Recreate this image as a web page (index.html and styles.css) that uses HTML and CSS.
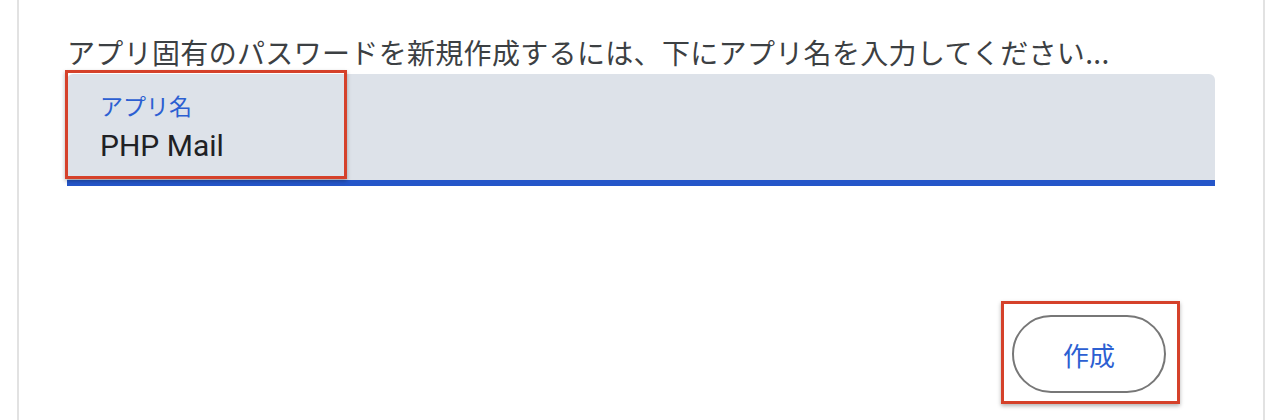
FILE: index.html
```html
<!DOCTYPE html>
<html lang="ja">
<head>
<meta charset="utf-8">
<link rel="stylesheet" href="styles.css">
</head>
<body>
<div class="card">
  <p class="intro">アプリ固有のパスワードを新規作成するには、下にアプリ名を入力してください...</p>
  <div class="field">
    <span class="label">アプリ名</span>
    <span class="value">PHP Mail</span>
    <div class="mark mark-field"></div>
  </div>
  <div class="actions">
    <div class="btn-wrap">
      <button class="btn">作成</button>
      <div class="mark mark-btn"></div>
    </div>
  </div>
</div>
</body>
</html>
```
FILE: styles.css
```css
html, body {
  margin: 0;
  padding: 0;
  background: #ffffff;
}
body {
  width: 1288px;
  height: 420px;
  overflow: hidden;
  font-family: Roboto, "Noto Sans CJK JP", sans-serif;
}
.card {
  box-sizing: border-box;
  margin: 0 23px 0 17px;
  height: 420px;
  border-left: 2px solid #e2e2e2;
  border-right: 2px solid #e2e2e2;
  padding: 34px 48px 0 48px;
}
.intro {
  margin: 0 0 4px 0;
  font-family: "Noto Sans CJK JP", sans-serif;
  font-size: 28px;
  line-height: 36px;
  letter-spacing: 0.33px;
  color: #3c4043;
  white-space: nowrap;
}
.field {
  position: relative;
  box-sizing: border-box;
  height: 112px;
  background: #dde2e9;
  border-radius: 6px 6px 0 0;
  border-bottom: 6px solid #2556c9;
  padding: 17px 33px 0 33px;
  display: flex;
  flex-direction: column;
}
.label {
  font-family: "Noto Sans CJK JP", sans-serif;
  font-size: 23px;
  line-height: 28px;
  color: #2c5fd2;
}
.value {
  margin-top: 9px;
  font-family: Roboto, sans-serif;
  font-size: 30px;
  line-height: 36px;
  color: #202124;
}
.actions {
  display: flex;
  justify-content: flex-end;
  padding-top: 129px;
  padding-right: 49px;
}
.btn-wrap {
  position: relative;
}
.btn {
  box-sizing: border-box;
  width: 154px;
  height: 78px;
  border: 2px solid #777777;
  border-radius: 39px;
  background: #ffffff;
  font-family: "Noto Sans CJK JP", sans-serif;
  font-size: 26px;
  color: #2c5fd2;
  padding: 0;
  display: block;
}
.mark {
  position: absolute;
  box-sizing: border-box;
  border: 3px solid #d5412a;
  box-shadow: 0 2px 4px rgba(0, 0, 0, 0.3);
  pointer-events: none;
}
.mark-field {
  left: -2px;
  top: -4px;
  width: 282px;
  height: 109px;
}
.mark-btn {
  left: -11px;
  top: -14px;
  width: 179px;
  height: 103px;
}
```
